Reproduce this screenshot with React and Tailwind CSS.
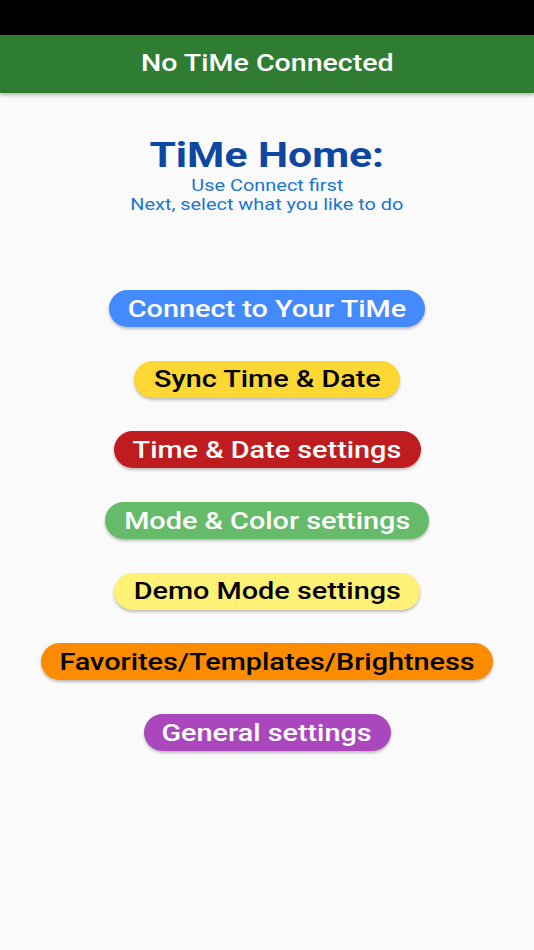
import React from "react";

const buttons = [
  { label: "Connect to Your TiMe", cls: "bg-[#448aff] text-white w-[316px]" },
  { label: "Sync Time & Date", cls: "bg-[#fdd835] text-black w-[266px]" },
  { label: "Time & Date settings", cls: "bg-[#bf1c1f] text-white w-[307px]" },
  { label: "Mode & Color settings", cls: "bg-[#66bb6a] text-white w-[324px]" },
  { label: "Demo Mode settings", cls: "bg-[#fff176] text-black w-[306px]" },
  { label: "Favorites/Templates/Brightness", cls: "bg-[#fb8c00] text-black w-[452px]" },
  { label: "General settings", cls: "bg-[#ab47bc] text-white w-[247px]" },
];

// the screenshot is stretched sideways, so text gets a matching scale-x
const Wide = ({ children, className = "" }) => (
  <span className={`inline-block scale-x-[1.2] whitespace-nowrap ${className}`}>{children}</span>
);

export default function App() {
  return (
    <div className="w-[534px] h-[950px] bg-[#fafafa] flex flex-col font-['Roboto',sans-serif]">
      <div className="h-[35px] bg-black" />
      <div className="h-[58px] bg-[#2e7d32] flex items-center justify-center shadow-[0_2px_4px_rgba(0,0,0,0.3)]">
        <Wide className="text-white text-[23.8px] font-medium">No TiMe Connected</Wide>
      </div>

      <div className="flex flex-col items-center pt-[41px]">
        <h1 className="text-[#0d47a1] text-[35.5px] font-bold leading-[42px]">
          <Wide>TiMe Home:</Wide>
        </h1>
        <div className="text-[#1976d2] text-[16.6px] leading-[19px] flex flex-col items-center">
          <Wide>Use Connect first</Wide>
          <Wide>Next, select what you like to do</Wide>
        </div>
      </div>

      <div className="flex flex-col items-center gap-[33.7px] pt-[76px]">
        {buttons.map((b) => (
          <button
            key={b.label}
            className={`h-[37px] rounded-full flex items-center justify-center text-[24px] font-medium shadow-[0_2px_3px_rgba(0,0,0,0.25)] ${b.cls}`}
          >
            <Wide>{b.label}</Wide>
          </button>
        ))}
      </div>
    </div>
  );
}
